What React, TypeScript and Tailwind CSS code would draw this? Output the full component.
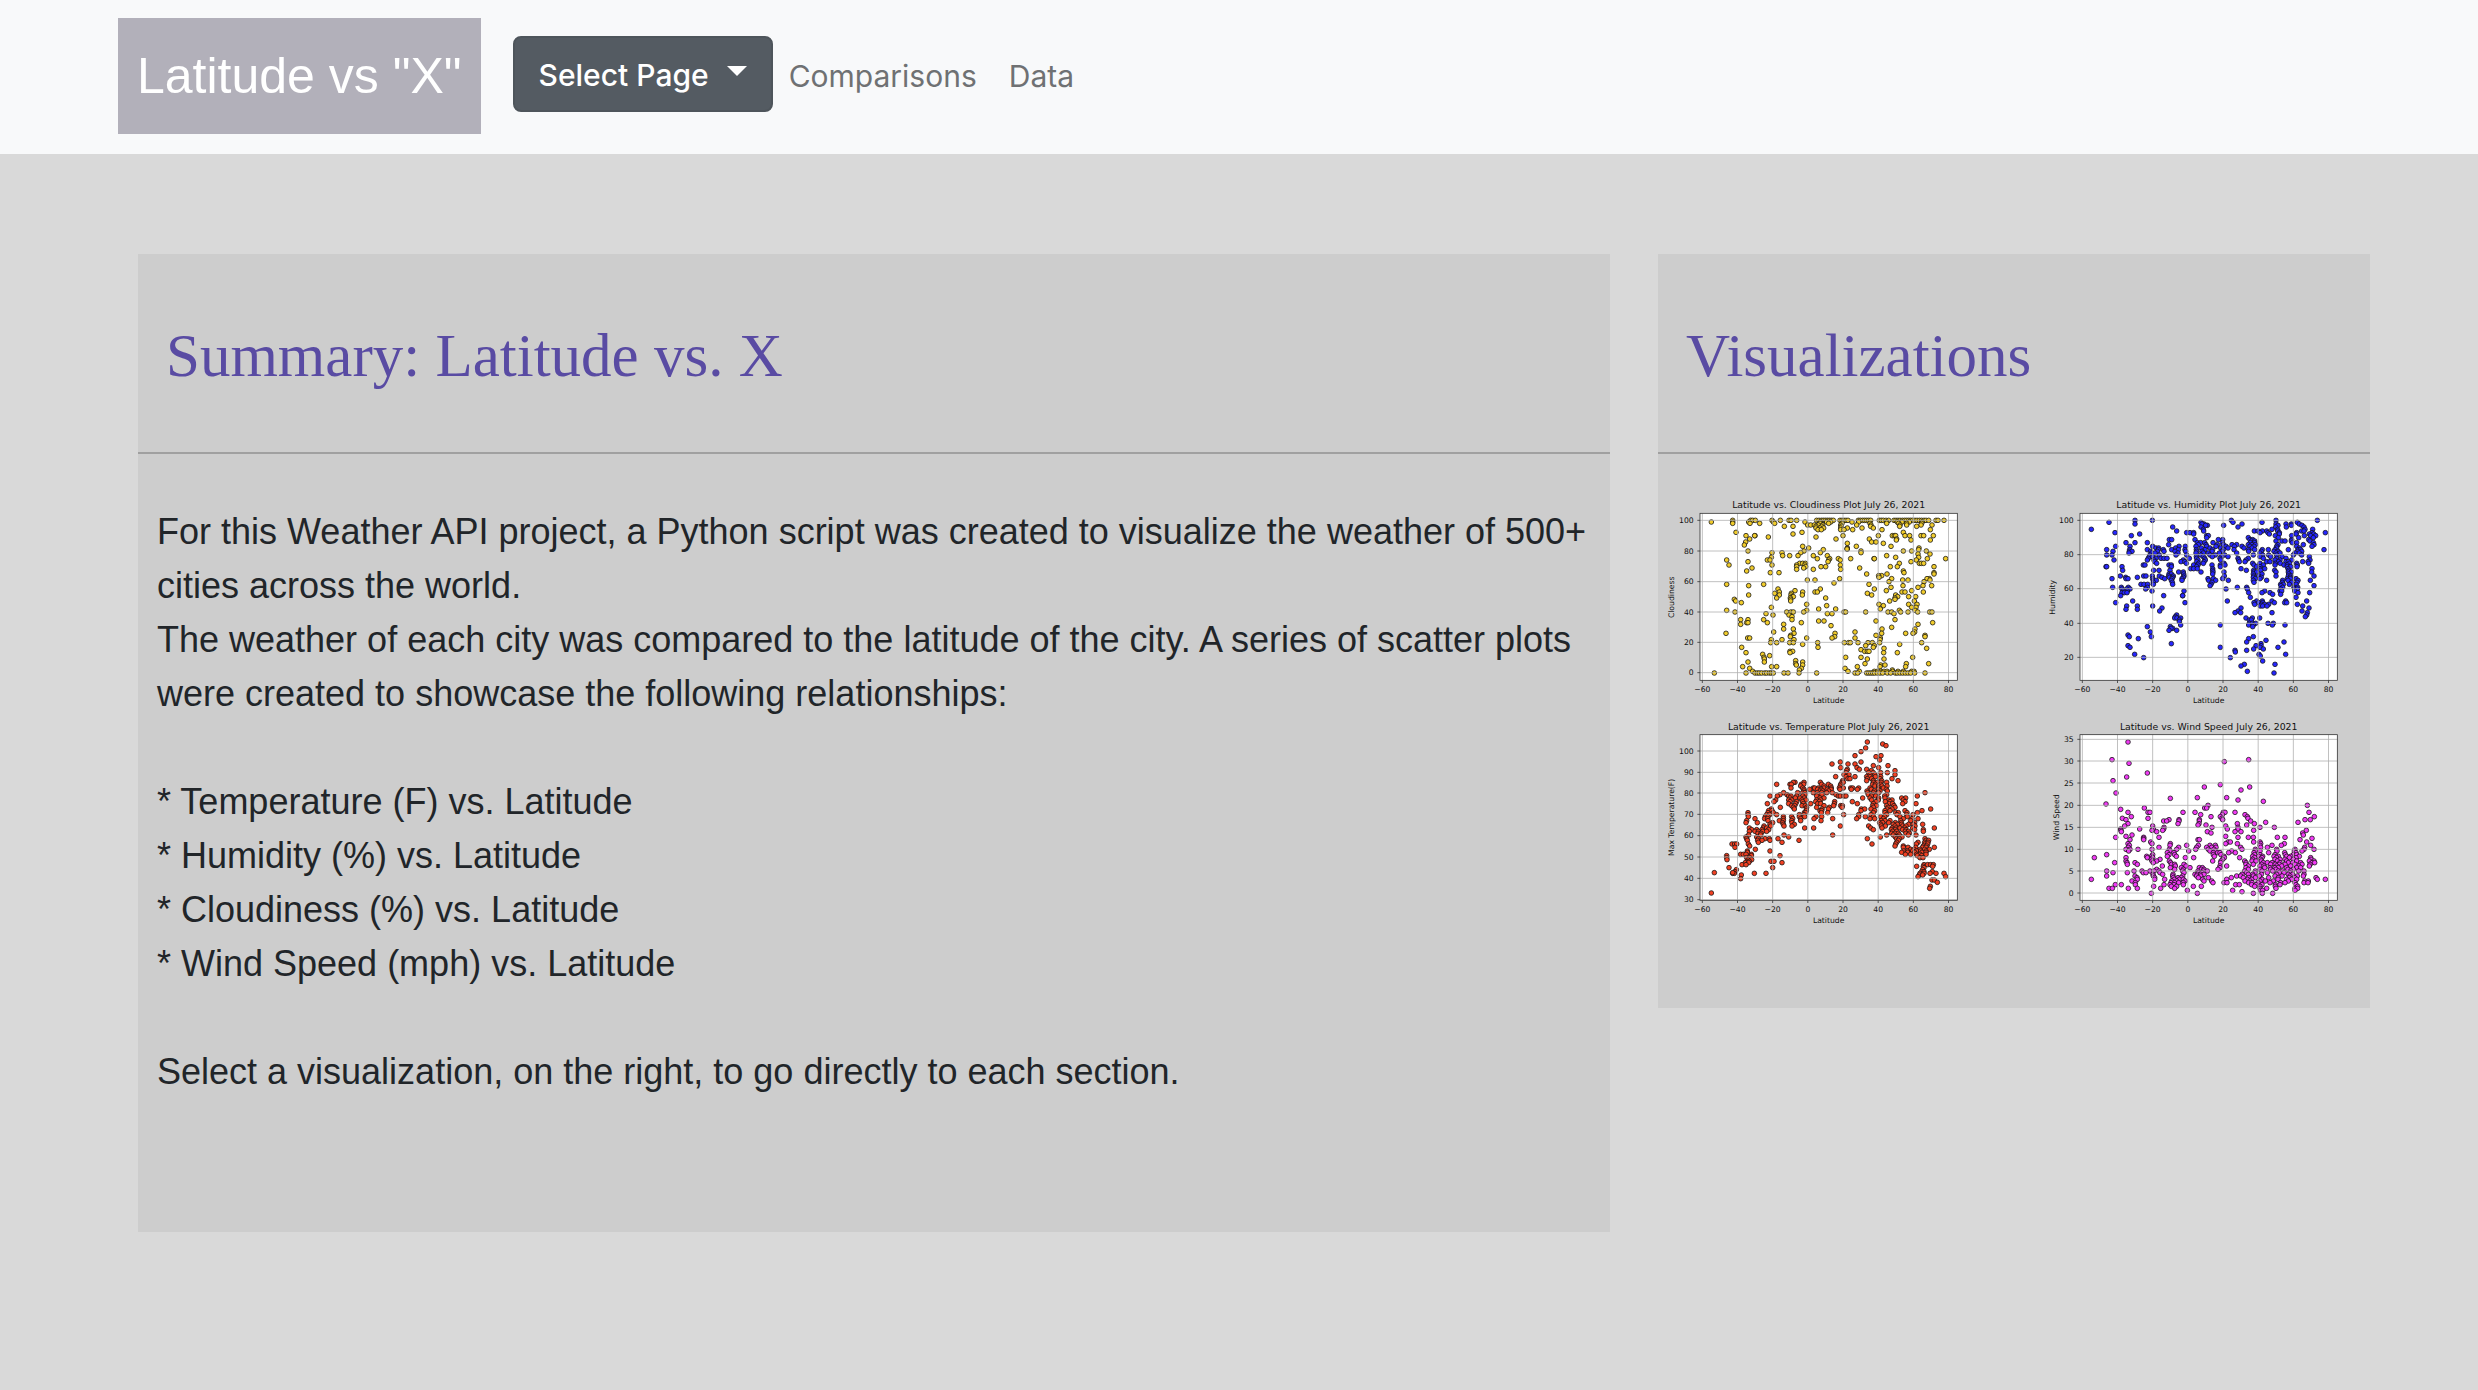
import React from "react";

type Tick = [label: string, y: number];

type Chart = {
  id: string;
  title: string;
  yLabel: string;
  yLabelX: number;
  left: number;
  top: number;
  color: string;
  ticks: Tick[];
  /** Rows of points, written as "y:x x x" and separated by semicolons. */
  points: string;
};

const BOTTOM = 601;
const PLOT_WIDTH = 772;
const X_TICKS = ["−60", "−40", "−20", "0", "20", "40", "60", "80"];

const CHARTS: Chart[] = [
  {
    id: "cloudiness",
    title: "Latitude vs. Cloudiness Plot July 26, 2021",
    yLabel: "Cloudiness",
    yLabelX: 102,
    left: 180,
    top: 100,
    color: "#f0c81a",
    ticks: [["100", 121], ["80", 213], ["60", 305], ["40", 396], ["20", 487], ["0", 578]],
    points:
      "121:278 332 338 346 396 421 447 453 470 530 537 544 550 556 562 568 574 580 600 606 612 618 624 655 661 668 674 680 686 692 718 724 730 738 746 762 768 774 780 787 794 800 806 812 818 825 831 838 845 852 858 866 888 894 912;" +
      "126:214 278 326 400 495 541 560 572 636 656 740 772 786 808 846;" +
      "130:278 330 359 404 540 566 606 690 740 776 800 845;" +
      "135:503 512 523 535 548 602 650 693 780 800 843 876;139:433 459 528 545 604 692 779 830;" +
      "144:528 540 551 602 622 666 700;149:534 544 602 612 638 726 871;157:288 486 790;162:459;" +
      "167:318 345 344 609 715 757 763 767 795 809 843 851 880;171:385 528;177:329 588 688 770;180:769 813 871;" +
      "186:317 695 708;190:622 730;195:313;199:488 649 753;204:506 622 837;207:622 621;209:550 836;213:324 492 663 790 815 859;" +
      "218:396 426 482 541 663;222:834 870;227:428 449 474 520 562 740;232:394 767 836;236:532 569 595 632 702 703 862 917;" +
      "240:260 382 390 566 601 829;245:324 564 813;250:479 488 496 778 838 844 851;255:267 396 470 495 601;" +
      "260:470 497 543 557 751 772 882;264:336 491 659;268:470 520 602;273:320 790;278:391 417 792 882;" +
      "282:680 741 882;287:725 716;292:717;296:599 755 868 861;300:502 525 788 804 870;305:747 852;309:582;" +
      "313:260 371 687;317:326 789 849 875;322:753 834;327:414 541 703;332:465 739 815;336:418 488 525 532 786 795 850;" +
      "340:404 454 682;345:326 418 453 487 695 767;350:456 460 773 806 827;354:410 451 557 765;358:283 452 765;" +
      "363:287 452 749 823;368:304;373:500 717 806 831;377:560 730;382:394 815 828;387:536 587 721;" +
      "391:260 500 778 825;396:285 440 453 460 491 612 617 677 744 755 782 804 833 869 876;" +
      "401:378 562 576 762;405:399 447;410:456;419:302 324 371 456 765;423:536 552 708;" +
      "428:320 324 382 484 878;433:302 431 834;437:573;442:755;447:431 460 726 825;456:401 645 824;" +
      "460:258 462 585 725 797 819;466:452 708 855;470:451 584 855;474:323 329 500 576 645 721;" +
      "479:394 426 462 720;488:392 410 449 460 533 613 626 631 654 684 697 719 845;493:488 779;497:677 703;" +
      "502:305 534 700;505:732 860;509:663;514:450 458 674 682 687;518:318 450 731 772;523:368;527:389;" +
      "532:372 617 663 818;537:373 682 732;542:467;546:324 373 488;551:467 675 799 866;555:469 488 722 735;" +
      "560:308 395 410 652 720 797;565:329 484 615;570:478 757;574:338 624 658 703 712 722 732 741 758 774 790 815 822;" +
      "579:223 318 345 352 358 365 374 380 388 394 400 432 444 477 530 645 653 680 686 692 698 704 712 720 728 742 752 766 772 780 788 796 804 812 824 855",
  },
  {
    id: "humidity",
    title: "Latitude vs. Humidity Plot July 26, 2021",
    yLabel: "Humidity",
    yLabelX: 75,
    left: 150,
    top: 100,
    color: "#1414ff",
    ticks: [["100", 121], ["80", 224], ["60", 326], ["40", 430], ["20", 532]],
    points:
      "121:315 367 604 738 862;127:237 513 609 696 802;132:315 522 516 636 738 808 768 784;136:532 581 527 744 784 816;" +
      "141:428 513 624 737 769 822;148:184 520 726 743 825 848;153:440 521 673 684 697 710 743 815 822;" +
      "158:255 470 480 491 690 714 748 800 846 886;162:329 491 718 748 798 838 851;167:304 530 535 736 785 823 842 857;" +
      "173:530 655 745 806 850;179:418 425 495 565 578 660 668 785 836;183:665 674 738 756 765 784 840;" +
      "188:288 315 352 502 512 524 549 577 661 674 787 800 850;194:416 505 528 562 580 606 620 655 666 676 744 820 852;" +
      "199:257 300 368 447 466 498 530 558 588 613 636 660 672 740 800 846;204:378 386 437 514 540 572 594 642 666 740 808;" +
      "209:230 299 352 385 400 425 445 465 499 525 548 580 612 655 674 697 715 735 775 804 812 882;" +
      "214:249 298 306 362 382 402 435 467 500 516 546 576 656 694 732 744 803 815;" +
      "219:297 365 375 444 498 520 535 568 620 690 738 750 795 808;" +
      "225:230 246 360 388 438 470 512 540 556 584 670 698 716 740 790 815;" +
      "230:358 368 499 520 547 575 594 690 722 756 838;235:355 378 393 402 411 478 500 524 570 624 655 700 740 768;" +
      "240:252 352 372 460 504 526 572 626 648 735 750 785 840;245:374 453 465 500 522 628 645 710 720 745 768 775 818 834;" +
      "250:380 469 506 520 582 668 690 736 751 778 800 836;255:340 345 417 424 491 504 546 571 585 672 700 735 762 772 802;" +
      "260:228 230 276 424 500 571 680 690 772 782 801;266:482 491 502 548 633 690 704 774 846;" +
      "271:278 371 387 420 548 649 671 692 734 776;276:446 460 513 549 582 672 680 738 775 784 845;" +
      "282:417 424 461 548 670 696 776;288:271 341 348 367 388 416 430 462 583 671 686 738 775 782 852;" +
      "292:287 322 396 418 428 460 670 694 781;296:246 288 294 368 404 426 456 534 550 578 676 690 772 781 798;" +
      "301:370 379 424 456 536 557 595 670 710 758 774 804 841;307:370 427 546 672 757 785 801;" +
      "313:333 342 353 370 428 543 752 760 778 798;317:540 753 852;322:248 274 295 352 622 650 758 792 803;" +
      "327:276 290 300 347 588 652 752 794 802;333:279 292 366 462 704 750 755 794;338:276 283 291 656 696 720 804 839;" +
      "343:752 728;347:272 401 458 458;352:661 798;363:308 592 680 697 726 767 830;368:257 465 672 686 698 733 764 770;" +
      "373:674 695 704 716 802;378:290 322 368 691 698 711 818;384:396 633 837;388:288 322;393:389 624 816;" +
      "398:615 632 726 832;405:440 830;410:436 826;414:434 441 452 648 667 689;420:448 658 664;" +
      "425:448;430:658 667 677 714 730;435:452 571 656 670 727 765;440:352 421 668;445:428 423;" +
      "451:417 440;456:361;465:294;470:298 364 670;476:325 656;481:708;486:650 762;491:424 693;497:294 678 693;" +
      "502:300 571 690 744;507:671 700;511:615 650;516:616;523:314 687 767;528:691;533:341 601;543:698;553:643 735;558:633;574:652;579:732",
  },
  {
    id: "temperature",
    title: "Latitude vs. Temperature Plot July 26, 2021",
    yLabel: "Max Temperature(F)",
    yLabelX: 102,
    left: 180,
    top: 104,
    color: "#f03010",
    ticks: [["100", 153], ["90", 217], ["80", 279], ["70", 343], ["60", 407], ["50", 471], ["40", 535], ["30", 599]],
    points:
      "126:682;132:728;137:738;144:677;155:663;167:645 723;170:708;180:719;186:601 663;192:576 624 645;197:700 744;203:602 651 716;" +
      "208:622 680 658;212:620 694 765;218:618 686 700 722 742;224:612 627 690 705 765;230:587 618 645 680 690 706 722;" +
      "236:624 630 682 695 720 756;242:608 680 700 725 774;247:465 460 492 541 606 610 700 712 723 740;" +
      "253:410 450 454 484 491 545 565 602 698 706 722;258:482 552 572 601 705 716 726 741;" +
      "264:453 488 520 524 535 552 574 598 610 632 638 656 690 716 730;268:492 509 533 543 562 573 600 634 652 694 715 739;" +
      "273:492 540 548 566 681 703 720 742;278:431 473 488 495 520 532 545 560 577 683 700 716 855;" +
      "284:420 441 495 534 546 588 685 698 740;288:390 412 446 453 470 488 530 595 601 612 618 694 707 734 832;" +
      "294:450 466 480 493 540 552 668 690 716 735 785 797;" +
      "300:407 446 455 486 498 530 542 695 715 747 756 790;305:402 450 470 488 527 538 584 637 708 736 750 795;" +
      "311:382 446 467 490 512 533 542 583 652 700 748 758 788 828;317:455 464 486 496 552 581 602 607 698 709 740 762;" +
      "322:421 460 500 530 568 606 700 744 765;327:394 463 499 546 565 664 674 693 741 756 872;" +
      "332:386 396 499 540 545 663 704 735 750 795 846;338:324 384 400 493 497 544 563 700 735 767 775 801 832;" +
      "344:324 380 389 410 478 492 611 656 693 740 771 800 819;350:325 376 384 430 455 478 494 528 545 656 676 700 722 734 780 802;" +
      "356:345 374 383 430 458 482 522 578 650 690 704 730 790 816 834;362:320 384 418 430 455 482 543 724 735 750 782 812;" +
      "368:318 352 398 428 456 719 728 746 766 784 824;373:390 430 463 722 760 772 785 806 820 848;" +
      "378:372 392 432 456 601 686 724 736 765 788 798 825;384:328 370 380 494 521 692 726 756 768 780 794 818 883;" +
      "389:335 350 366 386 700 754 766 788 798 824 850;394:328 345 355 368 380 758 770 796 806 850;" +
      "400:354 363 755 765 775 798 808;405:326 362 432 578 740 760 778 805 828;" +
      "411:318 350 446 721 766 775 786;416:320 355 375 388 414 682 770 778 855;421:322 353 366 390 477 775 858 866;" +
      "427:355 426 770 834 854 864;432:276 284 290 325 696 767 829 855 863;438:329 765 790 850 860;" +
      "442:285 790 804 827 848 858 883;448:346 812 822 840 854 868;453:390 322 791 802 818 830 842 858;" +
      "457:322 785 803 824 846 858;463:302 310 318 334 796 812 830 840 858;467:260 334 420 832 845;" +
      "473:260 320 329 840 849;479:261 324 335;484:322 328 393 402;488:316 326 426;494:306 318 852 863 872 880;" +
      "499:830 850 878;503:267 398 852;509:289 848;515:285 845 852 877;520:278 283 343 378 840 852 870 888 912;" +
      "518:223 278;525:304 838 848;530:834 917;536:302;540:876 883;547:892;559:871;565:869;579:214",
  },
  {
    id: "wind-speed",
    title: "Latitude vs. Wind Speed July 26, 2021",
    yLabel: "Wind Speed",
    yLabelX: 87,
    left: 150,
    top: 104,
    color: "#f02af5",
    ticks: [["35", 118], ["30", 183], ["25", 249], ["20", 316], ["15", 382], ["10", 448], ["5", 513], ["0", 579]],
    points:
      "126:294;179:246 656;185:583;190:297;219:352;231:290;242:249;254:571;261:523 659;270:633;279:258;293:502 590;295:421;300:624;304:700;" +
      "312:228;316:534 832;324:343 524 530;328:272;337:294 354 360 459 495 580 585 615 837;344:512 577 645;350:304 543 571 652 853;" +
      "355:277 354 576 654;359:288 417 447 508 578 825 841;363:401 410 447 508 662;367:707 804;371:294 444 507 622 673;" +
      "375:528 504 650;378:284 368 587;382:402 546 624 690 733;387:272 329 370 401 592 624;391:273 366 398 671 829;" +
      "395:274 380 532 615 633;399:543 818;405:306 820;409:288 587;412:257 341 387 624 655 670 742 765;415:341 846;" +
      "419:300 341 504 508 810;426:362 594 601 671 690 830;431:294 366 421 587 622 692 763;436:298 420 470 505 540 556 690 726 754 842;" +
      "442:295 387 446 500 530 545 558 632 692 712 824;448:288 300 324 366 418 440 497 535 552 636 676 740 795 822 852;" +
      "453:296 420 476 540 556 605 676 690 741 793 816;458:412 432 550 563 570 596 616 672 716 764 798;" +
      "464:230 368 417 434 550 573 674 690 735 766 790 800;469:350 365 412 439 553 582 668 686 698 732 745 770 782 808;" +
      "473:193 288 352 368 466 491 583 629 674 696 740 778 798 842;478:364 390 578 668 692 735 750 765 790 843;" +
      "483:288 366 380 418 548 573 644 666 678 694 742 770 800 838 852;488:254 315 291 370 422 572 648 700 712 726 750 775 788 812 846 854;" +
      "493:322 292 425 462 434 648 670 695 722 736 748 765 795 816 840;498:397 436 468 570 590 655 690 702 740 755 782 806 838;" +
      "503:421 454 480 570 508 517 648 704 720 735 745 770 800 812;508:380 434 460 514 522 564 655 690 722 738 774 790;" +
      "513:230 312 336 360 372 387 458 504 520 532 644 676 696 728 745 758 782 806 822;" +
      "518:249 292 340 348 390 462 505 516 650 675 712 748 762 780;" +
      "523:369 398 429 495 502 512 522 636 655 668 694 740 775 788 822;528:230 315 370 428 458 500 512 620 632 670 688 735 756 780 802 820;" +
      "533:321 374 430 444 454 505 535 604 640 656 676 716 745 778 794 858;" +
      "538:184 322 374 404 433 448 460 518 590 652 665 696 744 770 785 800 862 886;" +
      "543:306 425 440 465 522 545 645 660 690 706 730 775 824 835;548:316 423 434 446 460 549 582 591 656 666 684 720 752 765 795 822 834;" +
      "554:256 274 316 402 420 432 460 617 628 665 678 696 736 750 798;559:371 424 440 490 514 674 690 736 803;" +
      "565:237 247 295 322 392 434 690 710 738 795 803;571:472 608 692 698 795;575:636;580:364 502 670 697 728",
  },
];

function parsePoints(rows: string): [number, number][] {
  return rows.split(";").flatMap((row) => {
    const [y, xs] = row.split(":");
    return xs.split(" ").map((x): [number, number] => [Number(x), Number(y)]);
  });
}

function ScatterPlot({ chart }: { chart: Chart }) {
  const { left, top, ticks } = chart;
  const right = left + PLOT_WIDTH;
  const middle = left + PLOT_WIDTH / 2;
  const xTicks = X_TICKS.map((label, i): [string, number] => [label, left + 7 + i * 105.5]);

  return (
    <svg viewBox={`${left - 120} 30 960 660`} role="img" aria-label={chart.title} className="block w-full font-['DejaVu_Sans',sans-serif]">
      <rect x={left} y={top} width={PLOT_WIDTH} height={BOTTOM - top} fill="#fff" />
      <g fill={chart.color} stroke="#000" strokeWidth="2.3" opacity="0.92">
        {parsePoints(chart.points).map(([x, y], i) => (
          <circle key={i} cx={x} cy={y} r="7" />
        ))}
      </g>
      <g stroke="#b0b0b0" strokeWidth="2.4">
        {xTicks.map(([label, x]) => (
          <line key={label} x1={x} x2={x} y1={top} y2={BOTTOM} />
        ))}
        {ticks.map(([label, y]) => (
          <line key={label} x1={left} x2={right} y1={y} y2={y} />
        ))}
      </g>
      <g stroke="#333" strokeWidth="2.4" fill="none">
        <rect x={left} y={top} width={PLOT_WIDTH} height={BOTTOM - top} />
        {xTicks.map(([label, x]) => (
          <line key={label} x1={x} x2={x} y1={BOTTOM} y2={BOTTOM + 8} />
        ))}
        {ticks.map(([label, y]) => (
          <line key={label} x1={left - 8} x2={left} y1={y} y2={y} />
        ))}
      </g>
      <g fill="#111" fontSize="23">
        {xTicks.map(([label, x]) => (
          <text key={label} x={x} y={635} textAnchor="middle">{label}</text>
        ))}
        {ticks.map(([label, y]) => (
          <text key={label} x={left - 19} y={y + 8} textAnchor="end">{label}</text>
        ))}
        <text x={middle} y={668} textAnchor="middle">Latitude</text>
        <text transform={`translate(${chart.yLabelX} 352) rotate(-90)`} textAnchor="middle">{chart.yLabel}</text>
      </g>
      <text x={middle} y={top - 15} fontSize="28" fill="#111" textAnchor="middle">{chart.title}</text>
    </svg>
  );
}

function Card({ title, children }: { title: string; children: React.ReactNode }) {
  return (
    <section className="bg-[#cdcdcd]">
      <h1 className="border-b-2 border-[#a0a0a0] px-7 pt-[68px] pb-[62px] font-['Liberation_Serif',serif] text-[61px] leading-[68px] font-normal text-[#594ba3]">
        {title}
      </h1>
      {children}
    </section>
  );
}

export default function App() {
  return (
    <div className="min-h-screen bg-[#d9d9d9] font-['Liberation_Sans',sans-serif] text-[#212529]">
      <nav className="flex items-start bg-[#f8f9fa] px-[118px] pt-[18px] pb-5">
        <a href="#home" className="mr-8 bg-[#b2b0ba] px-[19px] py-5 text-[50px] leading-[76px] whitespace-nowrap text-white">
          Latitude vs "X"
        </a>
        <div className="flex items-center pt-[18px] font-['Inter',sans-serif] text-[30px]">
          <button type="button" className="flex h-[76px] items-center gap-[18px] rounded-lg border-2 border-[#4e555b] bg-[#545b62] px-6 pt-0.5 font-medium whitespace-nowrap text-white">
            Select Page
            <span className="mb-2 border-x-[10px] border-t-[10px] border-x-transparent border-t-white" />
          </button>
          <a href="#comparisons" className="px-4 pt-1 text-[#6f7173]">Comparisons</a>
          <a href="#data" className="px-4 pt-1 text-[#6f7173]">Data</a>
        </div>
      </nav>

      <main className="grid grid-cols-3 items-start pt-[100px] pr-[84px] pl-[114px]">
        <div className="col-span-2 px-6">
          <Card title="Summary: Latitude vs. X">
            <div className="px-[19px] pt-[51px] pb-[133px] text-[36px] leading-[54px]">
              <p>
                For this Weather API project, a Python script was created to visualize the weather of 500+ cities across the world.
              </p>
              <p>
                The weather of each city was compared to the latitude of the city. A series of scatter plots were created to showcase the following relationships:
              </p>
              <ul className="my-[54px]">
                <li>* Temperature (F) vs. Latitude</li>
                <li>* Humidity (%) vs. Latitude</li>
                <li>* Cloudiness (%) vs. Latitude</li>
                <li>* Wind Speed (mph) vs. Latitude</li>
              </ul>
              <p>Select a visualization, on the right, to go directly to each section.</p>
            </div>
          </Card>
        </div>
        <div className="px-6">
          <Card title="Visualizations">
            <div className="grid grid-cols-2 gap-x-[60px] pt-9 pr-[10px] pb-[78px] pl-[2px]">
              {CHARTS.map((chart) => (
                <a key={chart.id} href={`#${chart.id}`}>
                  <ScatterPlot chart={chart} />
                </a>
              ))}
            </div>
          </Card>
        </div>
      </main>
    </div>
  );
}
